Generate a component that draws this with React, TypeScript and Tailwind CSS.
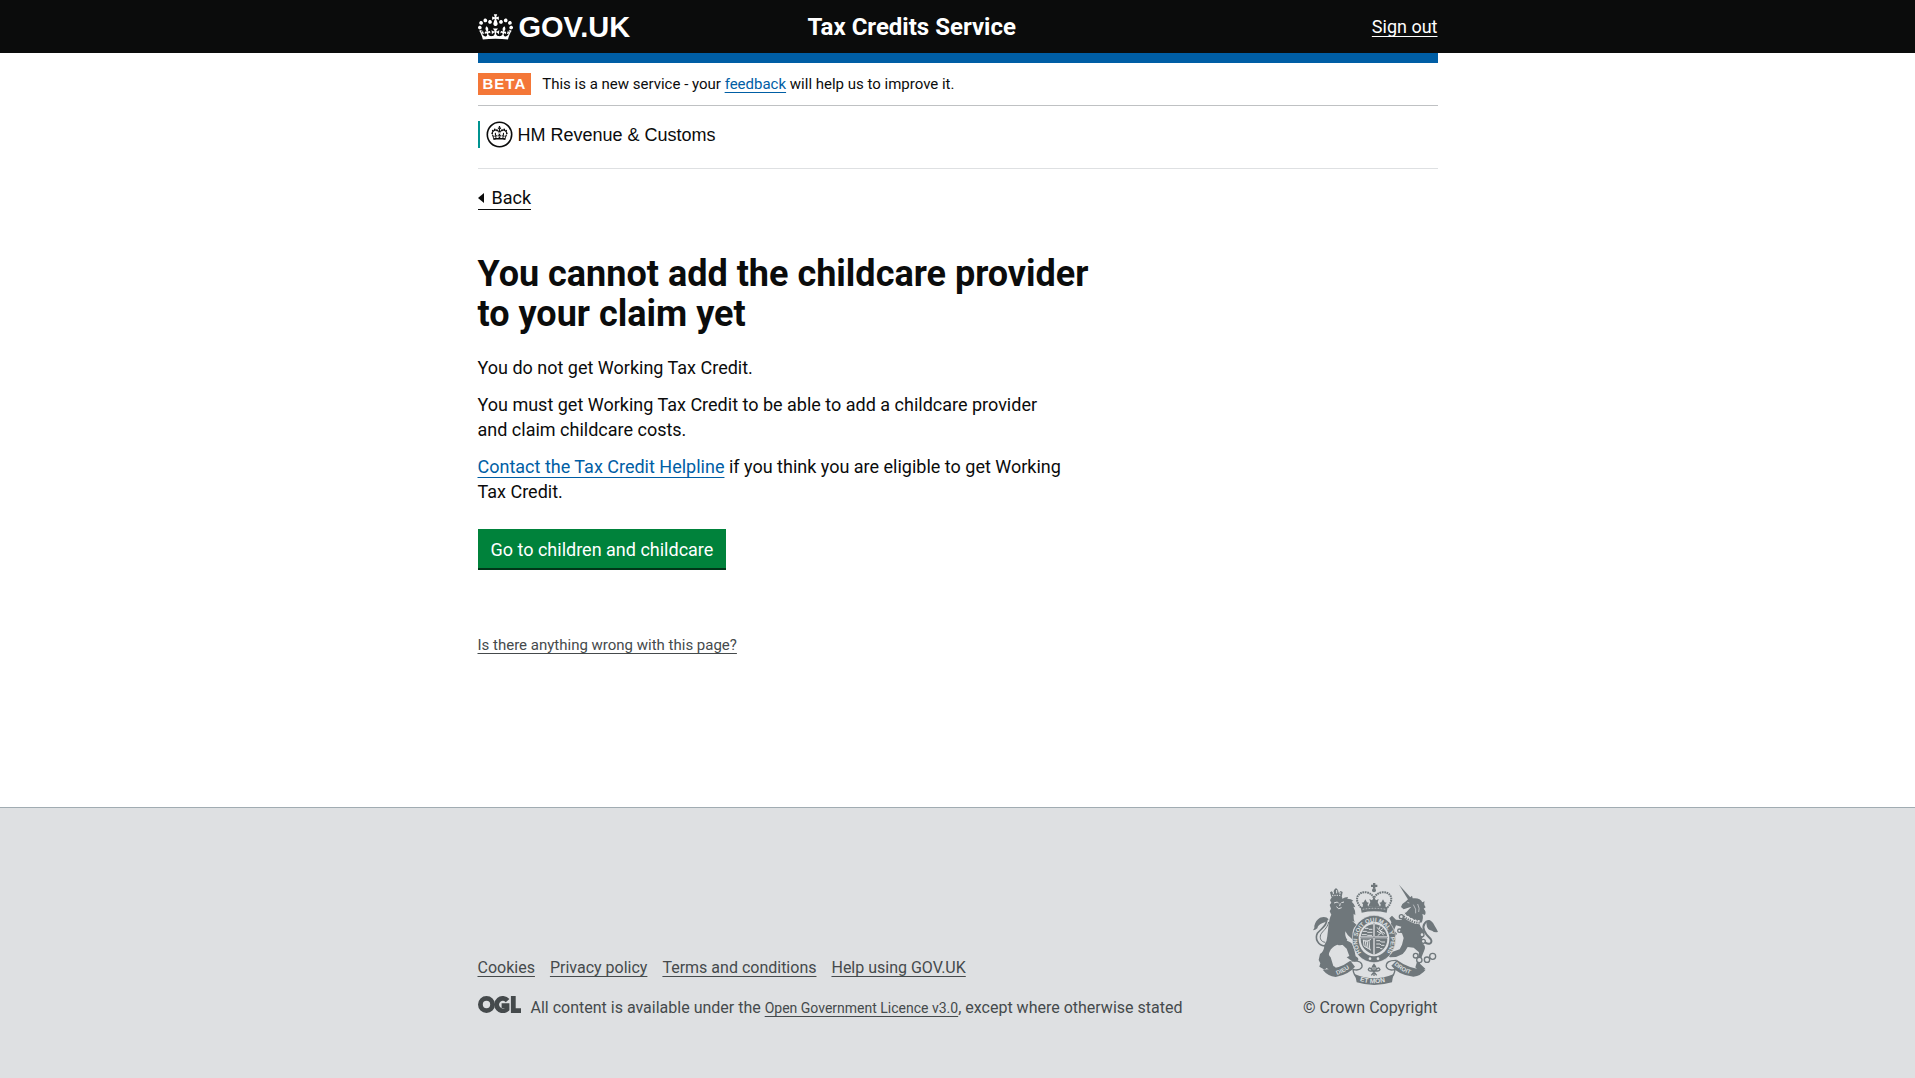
import React from "react";

const CROWN =
  "M25 30.2c3.5 1.5 7.7-.2 9.1-3.7 1.5-3.6-.2-7.8-3.9-9.2-3.6-1.4-7.6.3-9.1 3.9-1.4 3.5.3 7.5 3.9 9zM9 39.5c3.6 1.5 7.8-.2 9.2-3.7 1.5-3.6-.2-7.8-3.9-9.1-3.6-1.5-7.6.2-9.1 3.8-1.4 3.5.3 7.5 3.8 9zM4.4 57.2c3.5 1.5 7.7-.2 9.1-3.8 1.5-3.6-.2-7.7-3.9-9.1-3.5-1.5-7.6.3-9.1 3.8-1.4 3.5.3 7.6 3.9 9.1zm38.3-21.4c3.5 1.5 7.7-.2 9.1-3.8 1.5-3.6-.2-7.7-3.9-9.1-3.6-1.5-7.6.3-9.1 3.8-1.3 3.6.4 7.7 3.9 9.1zm64.4-5.6c-3.6 1.5-7.8-.2-9.1-3.7-1.5-3.6.2-7.8 3.8-9.2 3.6-1.4 7.7.3 9.2 3.9 1.3 3.5-.4 7.5-3.9 9zm15.9 9.3c-3.6 1.5-7.7-.2-9.1-3.7-1.5-3.6.2-7.8 3.7-9.1 3.6-1.5 7.7.2 9.2 3.8 1.5 3.5-.3 7.5-3.8 9zm4.7 17.7c-3.6 1.5-7.8-.2-9.2-3.8-1.5-3.6.2-7.7 3.9-9.1 3.6-1.5 7.7.3 9.2 3.8 1.3 3.5-.4 7.6-3.9 9.1zM89.3 35.8c-3.6 1.5-7.8-.2-9.2-3.8-1.4-3.6.2-7.7 3.9-9.1 3.6-1.5 7.7.3 9.2 3.8 1.4 3.6-.3 7.7-3.9 9.1zM69.7 17.7l8.9 4.7V9.3l-8.9 2.8c-.2-.3-.5-.6-.9-.9L72.4 0H59.6l3.5 11.2c-.3.3-.6.5-.9.9l-8.8-2.8v13.1l8.8-4.7c.3.3.6.7.9.9l-5 15.4v.1c-.2.8-.4 1.6-.4 2.4 0 4.1 3.1 7.5 7 8.1h.2c.3 0 .7.1 1 .1.4 0 .7 0 1-.1h.2c4-.6 7.1-4.1 7.1-8.1 0-.8-.1-1.7-.4-2.4V34l-5.1-15.4c.4-.2.7-.6 1-.9zM66 92.8c16.9 0 32.8 1.1 47.1 3.2 4-16.9 8.9-26.7 14-33.5l-9.6-3.4c1 4.9 1.1 7.2 0 10.2-1.5-1.4-3-4.3-4.2-8.7L108.6 76c2.8-2 5-3.2 7.5-3.3-4.4 9.4-10 11.9-13.6 11.2-4.3-.8-6.3-4.6-5.6-7.9 1-4.7 5.7-5.9 8-.5 4.3-8.7-3-11.4-7.6-8.8 7.1-7.2 7.9-13.5 2.1-21.1-8 6.1-8.1 12.3-4.5 20.8-4.7-5.4-12.1-2.5-9.5 6.2 3.4-5.2 7.9-2 7.2 3.1-.6 4.3-6.4 7.8-13.5 7.2-10.3-.9-10.9-8-11.2-13.8 2.5-.5 7.1 1.8 11 7.3L80.2 60c-4.1 4.4-8 5.3-12.3 5.4 1.4-4.4 8-11.6 8-11.6H55.5s6.4 7.2 7.9 11.6c-4.2-.1-8-1-12.3-5.4l1.4 16.4c3.9-5.5 8.5-7.7 10.9-7.3-.3 5.8-.9 12.8-11.1 13.8-7.2.6-12.9-2.9-13.5-7.2-.7-5 3.8-8.3 7.1-3.1 2.7-8.7-4.6-11.6-9.4-6.2 3.7-8.5 3.6-14.7-4.6-20.8-5.8 7.6-5 13.9 2.2 21.1-4.7-2.6-11.9.1-7.7 8.8 2.3-5.5 7.1-4.2 8.1.5.7 3.3-1.3 7.1-5.7 7.9-3.5.7-9-1.8-13.5-11.2 2.5.1 4.7 1.3 7.5 3.3l-4.7-15.4c-1.2 4.4-2.7 7.2-4.3 8.7-1.1-3-.9-5.3 0-10.2l-9.5 3.4c5 6.9 9.9 16.7 14 33.5 14.8-2.1 30.8-3.2 47.7-3.2z";

const FOOTER_LINKS = ["Cookies", "Privacy policy", "Terms and conditions", "Help using GOV.UK"];

function Roundel() {
  return (
    <svg viewBox="0 0 27 27" className="h-[27px] w-[27px]" aria-hidden="true">
      <circle cx="13.5" cy="13.5" r="12.2" fill="none" stroke="#0b0c0c" strokeWidth="1.6" />
      <g transform="translate(5.3 5) scale(.124 .145)">
        <path d={CROWN} fill="#0b0c0c" />
        <path d="M8 50C12 25 50 20 60 44M124 50C120 25 82 20 72 44" fill="none" stroke="#0b0c0c" strokeWidth="7" />
      </g>
    </svg>
  );
}

function OglLogo() {
  return (
    <svg viewBox="0 0 43 17" className="h-[17px] w-[43px] shrink-0" aria-label="Open Government Licence" role="img">
      <g fill="none" stroke="#454a4c" strokeWidth="4.8">
        <circle cx="8.5" cy="8.5" r="6.1" />
        <path d="M29.6 4.6A6.2 6.2 0 1 0 29 13.2V9.6H23.6" />
        <path d="M35.3 0V14.6H43" />
      </g>
    </svg>
  );
}

function Crest() {
  const c = "#6f777b";
  const bg = "#dee0e2";
  return (
    <svg viewBox="69 39 375 306" className="h-[102px] w-[125px]" aria-hidden="true">
      <defs>
        <path id="garter" d="M214 248A50 56 0 1 1 290 248" />
        <path id="dieu" d="M141 315Q170 305 194 283" />
        <path id="droit" d="M312 284Q334 306 372 316" />
        <path id="mon" d="M209 333Q252 347 299 332" />
      </defs>
      {/* Royal crown */}
      <g fill={c}>
        <path d="M249 39h7v5h6v7h-6v5h-7v-5h-6v-7h6z" />
        <circle cx="252" cy="61" r="6" />
        <path d="M212 112Q252 104 293 112L290 128Q252 120 215 128Z" />
        <path d="M252 82l6 9 8-4-3 10 6 12h-34l6-12-3-10 8 4zM226 88l5 9 6 1-4 5 1 8h-16l1-8-4-5 6-1zM279 88l5 9 6 1-4 5 1 8h-16l1-8-4-5 6-1z" />
      </g>
      <g fill="none" stroke={c} strokeWidth="6" strokeDasharray="5 2">
        <path d="M213 113C188 84 207 64 229 67C242 69 250 77 252 86" />
        <path d="M292 113C317 84 298 64 276 67C263 69 254 77 252 86" />
      </g>
      <path d="M218 118Q252 112 287 118" stroke={bg} strokeWidth="2" strokeDasharray="5 4" fill="none" />
      {/* Lion */}
      <g fill={c}>
        <path d="M120 67l5-3 5 5 2-9 6-6 6 6 2 8 6-5 6 3-3 15q-16-5-31 0z" />
        <path d="M126 80Q141 74 156 80L157 86Q164 82 174 81L172 86Q184 86 190 92L185 95Q193 101 196 112L190 110Q197 122 196 136L191 131Q190 148 194 156L186 152L200 165Q188 174 188 190L203 209L197 218L182 203Q171 195 166 184Q164 200 172 209L166 219Q155 229 142 224Q124 231 119 245Q113 254 122 262L130 288Q141 291 135 300H118L110 294L104 299L88 290L91 280L86 270L90 252Q101 246 103 229Q111 214 112 198L116 163Q119 142 124 134L119 124L123 116L119 105L124 98L120 91Z" />
        <path d="M150 205Q178 214 186 221L193 240L197 259Q208 264 204 272L193 275L180 269L170 262L178 258L170 236L155 222Z" />
        <path d="M90 143Q108 137 116 148Q108 157 98 159Q84 164 82 175Q76 181 69 181Q75 174 73 167Q77 151 90 143Z" />
      </g>
      <path d="M110 150C112 167 92 177 82 190C74 206 84 226 104 228L112 216" fill="none" stroke={c} strokeWidth="5" />
      <path d="M116 156C112 176 98 182 92 194C88 206 94 216 106 217" fill="none" stroke={c} strokeWidth="3" />
      <g fill="none" stroke={bg} strokeWidth="3">
        <path d="M132 99l10-3 4 4M154 98l8-2M139 110l7 6 9-3M151 100l-2 8" />
        <path d="M126 76h28" strokeDasharray="4 3" />
        <path d="M130 66v6M150 66v6M140 60v10" />
      </g>
      {/* Unicorn */}
      <g fill={c}>
        <path d="M327 44L363 84L355 90Z" />
        <path d="M358 84L366 77L368 85Q390 82 397 97L404 94Q400 104 407 112L401 116Q410 124 405 135L397 132Q402 146 394 158L386 157Q390 172 402 182Q404 195 396 207L397 220Q409 228 403 241L394 263L390 281L406 296L400 301H384L376 292L382 272L387 247L371 233L353 231Q345 246 338 252L318 261L300 262L292 254L304 247L329 238L336 224L341 204L336 190L326 186L334 170L318 166L312 181L321 191L316 199L304 193L299 178L304 157L298 145L306 137L318 149L334 150L346 130L364 110L350 115L341 118L333 111L337 102L348 94Z" />
        <path d="M416 150Q427 152 433 166Q440 177 444 186Q433 188 426 182Q411 180 410 166Q407 156 416 150Z" />
      </g>
      <path d="M397 209C416 232 430 218 422 207C404 190 394 174 404 160Q410 151 419 154" fill="none" stroke={c} strokeWidth="6" />
      <path d="M342 136Q365 156 389 157" fill="none" stroke={bg} strokeWidth="12" />
      <path d="M341 139Q364 158 389 158" fill="none" stroke={c} strokeWidth="6" strokeDasharray="4 3" />
      <path d="M346 128l5 9 7-5 3 11 8-5 3 11 7-6 3 10" fill="none" stroke={c} strokeWidth="3" />
      <path d="M352 97l6 2M370 104q10 14 7 26M383 102q7 14 3 24" fill="none" stroke={bg} strokeWidth="2" />
      <g fill={bg} stroke={c} strokeWidth="4">
        <circle cx="328" cy="182" r="5" />
        <circle cx="334" cy="140" r="6" />
        <circle cx="396" cy="194" r="6" />
        <circle cx="400" cy="214" r="6" />
        <circle cx="377" cy="257" r="7" />
        <circle cx="388" cy="270" r="8" />
        <circle cx="411" cy="269" r="8" />
        <circle cx="428" cy="259" r="9" />
      </g>
      {/* Garter and shield */}
      <ellipse cx="252" cy="207" rx="65" ry="71" fill={c} stroke={bg} strokeWidth="2" />
      <ellipse cx="252" cy="207" rx="46" ry="52" fill={bg} />
      <text fill={bg} fontSize="18" fontWeight="700" fontFamily="Liberation Sans, sans-serif">
        <textPath href="#garter">HONI SOIT QUI MAL Y PENSE</textPath>
      </text>
      <circle cx="240" cy="266" r="4" fill={bg} />
      <circle cx="264" cy="266" r="4" fill={bg} />
      <path d="M252 163C274 163 292 180 292 207C292 233 273 247 252 254C231 247 212 233 212 207C212 180 230 163 252 163Z" fill={c} />
      <path d="M252 158V256M210 202H294" stroke={bg} strokeWidth="6" />
      <path d="M252 158V254M210 202H294" stroke={c} strokeWidth="2" />
      <g fill="none" stroke={bg} strokeWidth="3" strokeLinecap="round">
        <path d="M226 175h8l3 3h9M219 184h10l4 3h13M217 194h12l4 2h12" />
        <path d="M262 173l18 22M278 176l-8 6 14 8M262 184l10 6-8 6M270 170l-2 6" />
        <path d="M220 210l2 18 20 12M225 210l4 22M231 210l3 24M237 210l2 26M220 212q12 6 22-3" />
        <path d="M260 212h10l4 4h10M260 222h10l4 4h8M260 232h8l4 4h4" />
      </g>
      {/* Motto ribbon and plant badge */}
      <g fill={c}>
        <path d="M98 299Q147 298 181 272L195 290Q177 313 137 321Q113 318 98 299Z" />
        <path d="M407 299Q358 298 321 270L304 287Q325 315 370 320Q393 317 407 299Z" />
        <path d="M195 313Q252 337 310 313L306 337Q252 353 200 337Z" />
      </g>
      <path d="M184 273Q219 270 216 291Q208 304 189 298Q190 313 204 327M320 271Q286 270 289 291Q297 304 315 298Q314 313 301 327" fill="none" stroke={c} strokeWidth="4" />
      <g fill={bg} fontWeight="700" fontFamily="Liberation Sans, sans-serif" fontSize="18">
        <text><textPath href="#dieu">DIEU</textPath></text>
        <text><textPath href="#droit">DROIT</textPath></text>
        <text fontSize="20"><textPath href="#mon">ET MON</textPath></text>
      </g>
      <path d="M252 281V318M241 303H264M252 283Q239 297 252 306Q265 297 252 283M249 304Q239 287 235 299Q237 304 243 303M255 304Q265 287 270 299Q267 304 261 303M252 306L244 316M252 306L260 316" fill="none" stroke={c} strokeWidth="4" />
    </svg>
  );
}

export default function App() {
  return (
    <div className="flex min-h-screen flex-col bg-white font-[Roboto,'Liberation_Sans',sans-serif] text-[18px] leading-[25px] text-[#0b0c0c]">
      <header className="bg-[#0b0c0c] text-white">
        <div className="mx-auto flex h-[53px] max-w-[960px] items-center">
          <div className="flex w-[330px] items-center">
            <a href="#home" className="flex items-center gap-[6px] font-['Liberation_Sans',sans-serif] text-[29px] leading-[30px] font-bold">
              <svg viewBox="0 0 132 97" className="h-[26px] w-[35px]" aria-hidden="true">
                <path d={CROWN} fill="#ffffff" />
              </svg>
              GOV.UK
            </a>
          </div>
          <a href="#service" className="text-[24px] leading-[30px] font-bold">Tax Credits Service</a>
          <a href="#sign-out" className="ml-auto underline decoration-1 underline-offset-3 [text-decoration-skip-ink:none]">Sign out</a>
        </div>
      </header>

      <div className="mx-auto w-full max-w-[960px] grow">
        <div className="h-[10px] bg-[#005ea5]" />
        <div className="flex h-[43px] items-center border-b border-[#bfc1c3]">
          <strong className="bg-[#f47738] px-[5px] font-['Liberation_Sans',sans-serif] text-[15px] leading-[22px] tracking-[1px] text-white">BETA</strong>
          <p className="ml-[11px] text-[15px] leading-[22px]">
            This is a new service - your{" "}
            <a href="#feedback" className="text-[#005ea5] underline decoration-1 underline-offset-3 [text-decoration-skip-ink:none]">feedback</a>{" "}
            will help us to improve it.
          </p>
        </div>
        <div className="flex h-[63px] items-start border-b border-[#dee0e2] pt-[15px]">
          <div className="flex h-[27px] items-center border-l-2 border-[#009390] pl-[6px] font-['Liberation_Sans',sans-serif]">
            <Roundel />
            <span className="ml-[5px] pt-[2px] leading-[27px]">HM Revenue &amp; Customs</span>
          </div>
        </div>

        <main>
          <a href="#back" className="mt-[17px] inline-flex items-center border-b border-[#0b0c0c] leading-[23px]">
            <svg viewBox="0 0 6 10" className="mr-[8px] h-[10px] w-[6px]" aria-hidden="true">
              <path d="M0 5L6 0V10Z" fill="#0b0c0c" />
            </svg>
            Back
          </a>
          <div className="max-w-[620px]">
            <h1 className="mt-[44px] text-[36px] leading-[40px] font-bold">You cannot add the childcare provider to&nbsp;your claim yet</h1>
            <p className="mt-[21px]">You do not get Working Tax Credit.</p>
            <p className="mt-[12px]">You must get Working Tax Credit to be able to add a childcare provider <br />and claim childcare costs.</p>
            <p className="mt-[12px]">
              <a href="#helpline" className="text-[#005ea5] underline decoration-1 underline-offset-4 [text-decoration-skip-ink:none]">Contact the Tax Credit Helpline</a>{" "}
              if you think you are eligible to get Working <br />Tax Credit.
            </p>
          </div>
          <button type="button" className="mt-[25px] block bg-[#00823b] px-[13px] pt-[8px] pb-[5px] leading-[26px] text-white shadow-[0_2px_0_#003618]">Go to children and childcare</button>
          <a href="#problem" className="mt-[67px] mb-[139px] inline-block text-[15px] leading-[20px] text-[#454a4c] underline decoration-1 underline-offset-3 [text-decoration-skip-ink:none]">Is there anything wrong with this page?</a>
        </main>
      </div>

      <footer className="border-t border-[#a1acb2] bg-[#dee0e2] text-[16px] leading-[20px] text-[#454a4c]">
        <div className="mx-auto flex max-w-[960px] items-end justify-between pt-[75px] pb-[60px]">
          <div>
            <nav className="flex gap-[15px]">
              {FOOTER_LINKS.map((label) => (
                <a key={label} href="#footer" className="underline decoration-1 underline-offset-3 [text-decoration-skip-ink:none]">{label}</a>
              ))}
            </nav>
            <div className="mt-[18px] flex items-start">
              <OglLogo />
              <p className="ml-[10px] pt-[2px]">
                All content is available under the{" "}
                <a href="#licence" className="text-[14px] underline decoration-1 underline-offset-3 [text-decoration-skip-ink:none]">Open Government Licence v3.0</a>
                , except where otherwise stated
              </p>
            </div>
          </div>
          <div className="flex flex-col items-end gap-[13px]">
            <Crest />
            <a href="#copyright">© Crown Copyright</a>
          </div>
        </div>
      </footer>
    </div>
  );
}
